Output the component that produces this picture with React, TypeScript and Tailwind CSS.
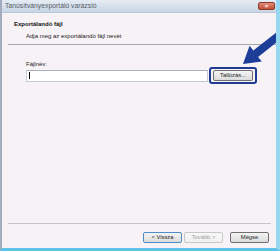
import React from "react";

// Tiny wizard button in the classic Vista style
function WizButton({ label, disabled, focused }: { label: string; disabled?: boolean; focused?: boolean }) {
  return (
    <div
      className={`w-[39px] h-[11px] flex items-center justify-center rounded-[2px] border text-[5.8px] bg-gradient-to-b from-[#f4f4f4] to-[#dcdcdc] ${
        disabled
          ? "border-[#c8c8c8] text-[#a0a0a0] from-[#f8f8f8] to-[#f0f0f0]"
          : focused
          ? "border-[#4e8cc8] text-[#222]"
          : "border-[#707070] text-[#222]"
      }`}
    >
      {label}
    </div>
  );
}

export default function App() {
  return (
    <div
      className="relative w-[280px] h-[251px] overflow-hidden flex flex-col bg-[#f7f2f6] border-l-2 border-l-[#a3acba] border-r-4 border-r-[#96d8f1] border-b-[3px] border-b-[#5ec3e6]"
      style={{ fontFamily: '"Liberation Sans", Arial, sans-serif' }}
    >
      {/* Title bar */}
      <div className="h-[13px] flex items-center justify-between pl-[3px] pr-[1px] bg-gradient-to-b from-[#e6ecf3] to-[#c7d5e6] border-b border-b-[#b9c6d6]">
        <span className="text-[6.8px] text-[#565e6a]">Tanúsítványexportáló varázsló</span>
        <div className="w-[17px] h-[8px] rounded-[2px] bg-gradient-to-b from-[#e08a78] to-[#c24f38] border border-[#8e3a2a] flex items-center justify-center">
          <span className="text-[6px] leading-none font-bold text-white">×</span>
        </div>
      </div>

      {/* Header */}
      <div className="h-[31px] flex flex-col pl-[12px] pt-[7px] gap-[3px]">
        <span className="text-[6px] font-bold text-[#111]">Exportálandó fájl</span>
        <span className="text-[6px] text-[#222] pl-[12px]">Adja meg az exportálandó fájl nevét</span>
      </div>
      <div className="h-px bg-[#a8a8a8] ml-[6px]" />

      {/* Body */}
      <div className="flex-1 flex flex-col pl-[24px] pt-[16px]">
        <span className="text-[6px] text-[#222] leading-none">Fájlnév:</span>
        <div className="flex items-center">
          <div className="w-[182px] h-[12px] bg-white border border-[#c6ccd6] border-t-[#a9b0bb] flex items-center pl-[2px]">
            <div className="w-px h-[7px] bg-black" />
          </div>
          <div className="ml-[1px] px-[2px] py-[1px] rounded-[3px] border-2 border-[#1f3c92]">
            <div className="w-[40px] h-[11px] flex items-center justify-center rounded-[2px] border border-[#707070] bg-gradient-to-b from-[#f4f4f4] to-[#dcdcdc] text-[5.8px] text-[#222]">
              Tallózás...
            </div>
          </div>
        </div>
      </div>

      {/* Footer */}
      <div className="h-px bg-[#c4c4c4] ml-[6px] mr-[5px]" />
      <div className="h-[24px] flex items-start pt-[8px] pl-[141px] gap-[2px]">
        <WizButton label="< Vissza" focused />
        <WizButton label="Tovább >" disabled />
        <div className="ml-[5px]">
          <WizButton label="Mégse" />
        </div>
      </div>

      {/* Pointer arrow */}
      <svg className="absolute left-0 top-0 pointer-events-none" width="280" height="251" viewBox="0 0 280 251">
        <polygon
          fill="#1c3d98"
          points="241,64 247.6,45.8 251.3,50.5 278.3,29.3 283.1,35.7 256.1,56.9 259.8,61.6"
        />
      </svg>
    </div>
  );
}
